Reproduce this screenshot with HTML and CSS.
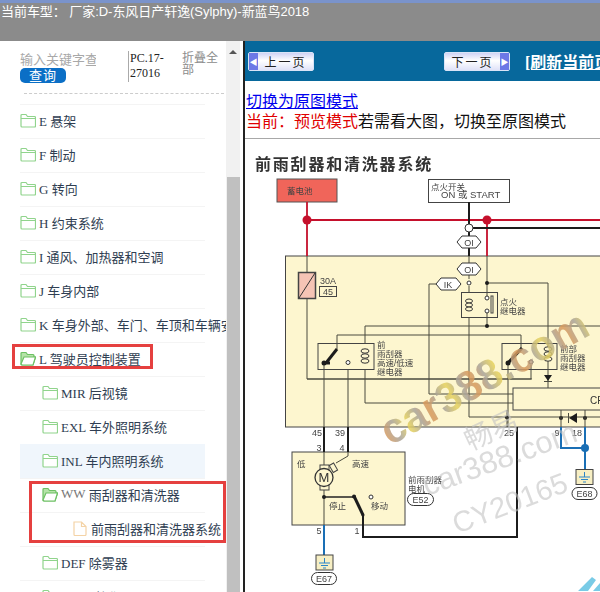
FILE: index.html
```html
<!DOCTYPE html>
<html lang="en">
<head>
    <meta charset="UTF-8">
    <meta name="viewport" content="width=device-width, initial-scale=1.0">
    <title>当前车型</title>
    <link rel="stylesheet" href="styles.css">
</head>
<body>
    <svg class="icon-defs" width="0" height="0">
        <symbol id="folder" viewBox="0 0 16 15">
            <path d="M1 13V2.500C1 1.800 1.400 1.500 2 1.500H6L7.500 3.500H14.500C15 3.500 15.500 4 15.500 4.500V13C15.500 13.600 15 14 14.500 14H2C1.400 14 1 13.600 1 13Z M1 5.500H15.500" fill="#fff" stroke="#90d48c" stroke-width="1.200"/>
        </symbol>
        <symbol id="folder-open" viewBox="0 0 16 15">
            <path d="M1 13V2.500C1 1.800 1.400 1.500 2 1.500H6L7.500 3.500H13C13.600 3.500 14 4 14 4.500V6H15.500L13 14H2C1.400 14 1 13.600 1 13Z" fill="#b5e3a8" stroke="#6cc063" stroke-width="1.200"/>
            <path d="M1 13L4 6H15.500L13 14H2Z" fill="#fff" stroke="#6cc063" stroke-width="1.200"/>
        </symbol>
        <symbol id="file" viewBox="0 0 14 15">
            <path d="M1 1H8.500L13 5.500V13.500C13 14 12.600 14.500 12 14.500H2C1.400 14.500 1 14 1 13.500Z M8.500 1V5.500H13" fill="#fff" stroke="#f4d3a6" stroke-width="1.200"/>
        </symbol>
    </svg>

    <div class="top-bar">
        <p class="car-title">当前车型： 厂家:D-东风日产轩逸(Sylphy)-新蓝鸟2018</p>
    </div>

    <div class="main">
        <div class="sidebar">
            <div class="search-area">
                <div class="search-box">
                    <div class="search-hint">输入关键字查询</div>
                    <div class="search-btn">查询</div>
                </div>
                <div class="pc-code">PC.17-27016</div>
                <div class="fold-all">折叠全部</div>
            </div>
            <ul class="tree">
                <li class="tree-row"><svg class="tree-icon"><use href="#folder"/></svg>E 悬架</li>
                <li class="tree-row"><svg class="tree-icon"><use href="#folder"/></svg>F 制动</li>
                <li class="tree-row"><svg class="tree-icon"><use href="#folder"/></svg>G 转向</li>
                <li class="tree-row"><svg class="tree-icon"><use href="#folder"/></svg>H 约束系统</li>
                <li class="tree-row"><svg class="tree-icon"><use href="#folder"/></svg>I 通风、加热器和空调</li>
                <li class="tree-row"><svg class="tree-icon"><use href="#folder"/></svg>J 车身内部</li>
                <li class="tree-row"><svg class="tree-icon"><use href="#folder"/></svg>K 车身外部、车门、车顶和车辆安全</li>
                <li class="tree-row"><svg class="tree-icon"><use href="#folder-open"/></svg>L 驾驶员控制装置</li>
                <li class="tree-row level-2"><svg class="tree-icon"><use href="#folder"/></svg>MIR 后视镜</li>
                <li class="tree-row level-2"><svg class="tree-icon"><use href="#folder"/></svg>EXL 车外照明系统</li>
                <li class="tree-row level-2 hover"><svg class="tree-icon"><use href="#folder"/></svg>INL 车内照明系统</li>
                <li class="tree-row level-2"><svg class="tree-icon"><use href="#folder-open"/></svg><span class="muted">WW</span>&nbsp;雨刮器和清洗器</li>
                <li class="tree-row level-3"><svg class="tree-icon file-icon"><use href="#file"/></svg>前雨刮器和清洗器系统</li>
                <li class="tree-row level-2"><svg class="tree-icon"><use href="#folder"/></svg>DEF 除雾器</li>
                <li class="tree-row level-2"><svg class="tree-icon"><use href="#folder"/></svg>HRN 喇叭</li>
            </ul>
            <div class="mark mark-l"></div>
            <div class="mark mark-ww"></div>
            <div class="scrollbar">
                <div class="scroll-up"></div>
                <div class="scroll-thumb"></div>
            </div>
        </div>

        <div class="content">
            <div class="toolbar">
                <div class="page-btn prev-btn"><span class="btn-arrow">◀</span><span class="btn-text">上一页</span></div>
                <div class="page-btn next-btn"><span class="btn-text">下一页</span><span class="btn-arrow">▶</span></div>
                <a class="refresh-link" href="#">[刷新当前页]</a>
            </div>
            <div class="mode-info">
                <a class="mode-link" href="#">切换为原图模式</a>
                <p class="mode-text"><span class="mode-current">当前：预览模式</span>若需看大图，切换至原图模式</p>
            </div>

            <svg class="diagram" viewBox="245 140 355 452" width="355" height="452">
                <defs>
                    <linearGradient id="goldText" gradientUnits="userSpaceOnUse" x1="0" y1="0" x2="26" y2="0" spreadMethod="reflect">
                        <stop offset="0" stop-color="#d99a5a"/>
                        <stop offset=".5" stop-color="#a9a39a"/>
                        <stop offset="1" stop-color="#e6d25e"/>
                    </linearGradient>
                </defs>

                <text class="dia-title" x="255" y="171">前雨刮器和清洗器系统</text>

                <!-- unit boxes -->
                <rect class="unit" x="285.500" y="257" width="330" height="171"/>
                <rect class="unit" x="292" y="453" width="113" height="73"/>
                <rect class="unit" x="513" y="389" width="100" height="22"/>

                <!-- supply -->
                <rect class="battery" x="277" y="180" width="60" height="23"/>
                <text class="label" x="287" y="195">蓄电池</text>
                <rect class="switch-box" x="428.500" y="180.500" width="81" height="23"/>
                <text class="label" x="431" y="191">点火开关</text>
                <text class="label-start" x="441" y="199">ON 或 START</text>

                <path class="wire-red" d="M307 203V257M307 221H600M487 221V257"/>
                <circle class="dot-red" cx="307" cy="221" r="4.500"/>
                <circle class="dot-red" cx="487" cy="221" r="4.500"/>
                <path class="wire-bold" d="M469 203V225M469 229H600M469 233V257"/>
                <circle class="node-big" cx="469" cy="229" r="4"/>

                <!-- thin harness -->
                <path class="wire" d="M469 257V280M469 287V293M469 319V418H600"/>
                <path class="wire" d="M307 257V380H532"/>
                <path class="wire" d="M436 285H429V395H513"/>
                <path class="wire" d="M487 257V299M487 312V327M487 284H548V389"/>
                <path class="wire" d="M365 327H600M365 327V344M365 370V404H513"/>
                <path class="wire" d="M337 350V336H521V349"/>
                <path class="wire" d="M324 364V526M348 370V457L336 464"/>
                <path class="wire" d="M508 364V428"/>
                <path class="wire" d="M531 366V380H307"/>

                <!-- connectors -->
                <path class="conn" d="M457 243L462 237H476L481 243L476 249H462Z"/>
                <text class="label-md" x="469" y="247" text-anchor="middle">OI</text>
                <path class="conn" d="M457 270L462 264H476L481 270L476 276H462Z"/>
                <text class="label-md" x="469" y="274" text-anchor="middle">OI</text>
                <path class="conn" d="M436 285L441 279H456L461 285L456 291H441Z"/>
                <text class="label-md" x="448" y="289" text-anchor="middle">IK</text>
                <circle class="node" cx="469" cy="284" r="2"/>
                <circle class="dot" cx="487" cy="284" r="2"/>
                <circle class="dot" cx="487" cy="327" r="2"/>

                <!-- fuse -->
                <rect class="fuse" x="298.500" y="273.500" width="17" height="26"/>
                <path class="wire-fuse" d="M299 299L315 274"/>
                <text class="label-md" x="320" y="285">30A</text>
                <rect class="fuse-no" x="319.500" y="287.500" width="17" height="10"/>
                <text class="label-md" x="328" y="296" text-anchor="middle">45</text>

                <!-- ignition relay -->
                <rect class="relay" x="461.500" y="293.500" width="36" height="25"/>
                <ellipse class="coil-loop" cx="469" cy="302" rx="3.500" ry="2"/>
                <ellipse class="coil-loop" cx="469" cy="306" rx="3.500" ry="2"/>
                <ellipse class="coil-loop" cx="469" cy="310" rx="3.500" ry="2"/>
                <circle class="node" cx="487" cy="299" r="2"/>
                <circle class="node" cx="487" cy="312" r="2"/>
                <rect class="relay" x="491" y="297" width="2" height="17"/>
                <text class="label" x="500" y="306">点火</text>
                <text class="label" x="500" y="315">继电器</text>

                <!-- wiper relays -->
                <rect class="relay" x="318" y="344.500" width="56" height="26"/>
                <path class="wire-thick" d="M324 364L330 364"/>
                <path class="wire-thick" d="M326 364L337 350"/>
                <circle class="dot" cx="324" cy="364" r="2.500"/>
                <circle class="node" cx="348" cy="363.500" r="2"/>
                <ellipse class="coil-loop" cx="365" cy="352" rx="4" ry="2.200"/>
                <ellipse class="coil-loop" cx="365" cy="357" rx="4" ry="2.200"/>
                <ellipse class="coil-loop" cx="365" cy="362" rx="4" ry="2.200"/>
                <text class="label" x="377" y="349">前</text>
                <text class="label" x="377" y="358">雨刮器</text>
                <text class="label" x="377" y="367">高速/低速</text>
                <text class="label" x="377" y="376">继电器</text>

                <rect class="relay" x="502" y="344.500" width="55" height="26"/>
                <path class="wire-thick" d="M508 364L522 349"/>
                <circle class="dot" cx="508" cy="364" r="2.500"/>
                <circle class="node" cx="531" cy="363" r="2"/>
                <ellipse class="coil-loop" cx="548" cy="350" rx="4" ry="2.200"/>
                <ellipse class="coil-loop" cx="548" cy="355" rx="4" ry="2.200"/>
                <ellipse class="coil-loop" cx="548" cy="360" rx="4" ry="2.200"/>
                <text class="label" x="560" y="353">前部</text>
                <text class="label" x="560" y="362">雨刮器</text>
                <text class="label" x="560" y="371">继电器</text>
                <path class="solid" d="M544 376H552L548 382Z"/>
                <path class="wire" d="M544 382.500H552"/>

                <!-- control unit -->
                <text class="label-lg" x="590" y="405">CPU</text>
                <circle class="dot" cx="507" cy="418.500" r="2"/>
                <path class="wire" d="M507 411V428"/>
                <circle class="dot" cx="561" cy="419" r="2"/>
                <circle class="dot" cx="585" cy="419" r="2"/>
                <path class="solid" d="M577 414V424L569 419Z"/>
                <path class="wire" d="M568.500 414V424M561 411V428M585 411V428"/>

                <!-- harness out of the unit -->
                <path class="wire-bold" d="M324 428V453M348 428V453M517 428V538H363V517"/>
                <path class="wire-blue" d="M561 428V449H585M585 428V471M324 526V556"/>
                <circle class="dot-blue" cx="585" cy="449" r="4"/>
                <text class="label-md" x="317" y="437" text-anchor="middle">45</text>
                <text class="label-md" x="340" y="437" text-anchor="middle">39</text>
                <text class="label-md" x="319" y="452" text-anchor="middle">3</text>
                <text class="label-md" x="342" y="452" text-anchor="middle">4</text>
                <text class="label-md" x="509" y="437" text-anchor="middle">25</text>
                <text class="label-md" x="557" y="437" text-anchor="middle">9</text>
                <text class="label-md" x="577" y="437" text-anchor="middle">18</text>
                <text class="label-md" x="319" y="535" text-anchor="middle">5</text>
                <text class="label-md" x="357" y="535" text-anchor="middle">1</text>

                <!-- motor -->
                <text class="label" x="297" y="468">低</text>
                <text class="label" x="352" y="468">高速</text>
                <rect class="unit" x="320" y="466" width="9" height="5"/>
                <rect class="unit" x="320" y="486" width="9" height="5"/>
                <rect class="unit" x="331" y="465" width="5" height="8" transform="rotate(-30 333 469)"/>
                <circle class="motor" cx="324" cy="478.500" r="9"/>
                <text class="label-motor" x="324" y="483" text-anchor="middle">M</text>
                <circle class="dot" cx="324" cy="498" r="2"/>
                <path class="wire-mid" d="M324 498H354"/>
                <path class="wire-thick" d="M354 497L363 516"/>
                <circle class="dot" cx="354" cy="497.500" r="2"/>
                <circle class="dot" cx="363" cy="516" r="1.500"/>
                <circle class="node" cx="371" cy="498" r="2"/>
                <text class="label" x="329" y="510">停止</text>
                <text class="label" x="371" y="510">移动</text>
                <text class="label" x="408" y="484">前雨刮器</text>
                <text class="label" x="408" y="493">电机</text>

                <!-- grounds -->
                <rect class="oval" x="407.500" y="494.500" width="26" height="12" rx="6"/>
                <text class="label-md" x="420.500" y="504" text-anchor="middle">E52</text>
                <rect class="ground" x="316" y="556" width="17" height="15"/>
                <path class="wire-ground" d="M324.500 559V564M319 564H330M321 566.500H328M323 569H326"/>
                <rect class="oval" x="311.500" y="573.500" width="25" height="12" rx="6"/>
                <text class="label-md" x="324" y="583" text-anchor="middle">E67</text>
                <rect class="ground" x="576" y="470.500" width="17" height="15"/>
                <path class="wire-ground" d="M584.500 473V478M579 478H590M581 480.500H588M583 483H586"/>
                <rect class="oval" x="572" y="488.500" width="25" height="12" rx="6"/>
                <text class="label-md" x="584.500" y="498" text-anchor="middle">E68</text>

                <!-- watermarks -->
                <text class="wm-big" transform="translate(390 447) rotate(-29)">car388.com</text>
                <text class="wm-cn" transform="translate(470 452) rotate(-25)">畅易</text>
                <text class="wm-gray" transform="translate(427 497) rotate(-20)">car388.com</text>
                <text class="wm-code" transform="translate(457 535) rotate(-21)">CY20165</text>
                <path class="wm-corner" d="M578 592L592 578L596 581L588 592ZM593 592L600 584V592Z"/>
            </svg>
        </div>
    </div>
</body>
</html>
```

FILE: styles.css
```css
* {
    margin: 0;
    padding: 0;
    box-sizing: border-box;
}

body {
    width: 600px;
    height: 592px;
    overflow: hidden;
    background: white;
    font-family: "Liberation Serif", "Noto Sans CJK SC", serif;
}

.icon-defs {
    position: absolute;
}

.top-bar {
    height: 41px;
    background: #8b8b8b;
    border-top: 3px solid #7a93cb;
    padding-left: 1px;
    padding-top: 1px;
}

.car-title {
    font-family: "Liberation Sans", "Noto Sans CJK SC", sans-serif;
    font-size: 13px;
    line-height: 15px;
    letter-spacing: -0.05px;
    color: white;
    white-space: nowrap;
}

.main {
    display: flex;
    height: 551px;
}

/* left tree */
.sidebar {
    position: relative;
    width: 245px;
    flex: none;
    overflow: hidden;
    padding-right: 19px;
    border-right: 2px solid #222;
}

.search-area {
    display: flex;
    height: 63px;
    margin-left: 20px;
    padding-top: 11px;
    position: relative;
}

.search-area::after {
    content: "";
    position: absolute;
    left: 4px;
    right: 0;
    bottom: 10px;
    border-bottom: 1px dashed #ccc;
}

.search-box {
    width: 108px;
    flex: none;
}

.search-hint {
    width: 76px;
    height: 16px;
    overflow: hidden;
    white-space: nowrap;
    font-size: 13px;
    line-height: 16px;
    color: #a8a8a8;
}

.search-btn {
    width: 46px;
    height: 15px;
    background: #0b6fc6;
    border-radius: 5px;
    color: white;
    font-size: 13px;
    line-height: 15px;
    text-align: center;
    letter-spacing: 1px;
}

.pc-code {
    width: 54px;
    height: 31px;
    flex: none;
    padding-left: 1px;
    border-left: 1px solid #aaa;
    font-size: 12px;
    line-height: 15px;
    color: #222;
    margin-top: -1px;
}

.fold-all {
    width: 37px;
    font-size: 12px;
    line-height: 12px;
    color: #8c8c8c;
}

.tree {
    list-style: none;
    width: 205px;
}

.tree-row {
    display: flex;
    align-items: center;
    height: 34px;
    margin-left: 20px;
    padding-bottom: 2px;
    width: 226px;
    font-size: 13px;
    color: #2f3e52;
    white-space: nowrap;
    overflow: hidden;
    background: linear-gradient(#f4f4f4, #f4f4f4) top left / 185px 1px no-repeat;
}

.tree-icon {
    width: 16px;
    height: 15px;
    flex: none;
    margin-right: 3px;
}

.level-2 {
    padding-left: 22px;
}

.level-3 {
    padding-left: 53px;
}

.file-icon {
    width: 14px;
    margin-right: 4px;
}

.hover {
    background: #f0f6fc;
    width: 185px;
}

.muted {
    color: #777;
}

.mark {
    position: absolute;
    border: 3px solid #e5403f;
}

.mark-l {
    left: 12px;
    top: 303px;
    width: 141px;
    height: 25px;
}

.mark-ww {
    left: 29px;
    top: 440px;
    width: 197px;
    height: 62px;
}

.scrollbar {
    position: absolute;
    left: 226px;
    top: 0;
    width: 17px;
    height: 100%;
    background: #f1f1f1;
    border-right: 3px solid white;
}

.scroll-up {
    position: absolute;
    left: 3px;
    top: 9px;
    border: 4px solid transparent;
    border-top: 0;
    border-bottom: 4px solid #555;
}

.scroll-thumb {
    position: absolute;
    left: 1px;
    top: 136px;
    width: 13px;
    bottom: 0;
    background: #c0c0c0;
}

/* right page */
.content {
    flex: 1;
    min-width: 0;
    overflow: hidden;
}

.toolbar {
    display: flex;
    align-items: center;
    height: 40px;
    padding-left: 3px;
    background: #07689c;
    white-space: nowrap;
    overflow: hidden;
}

.page-btn {
    display: flex;
    align-items: center;
    height: 19px;
    background: linear-gradient(#cfd3f5, #ffffff 45%, #dfe2f8);
    border: 1px solid #d9e4f7;
    border-radius: 2px;
    flex: none;
    font-family: "Noto Sans CJK SC", sans-serif;
    font-size: 12px;
    color: #222;
}

.prev-btn {
    width: 66px;
}

.next-btn {
    width: 66px;
    margin-left: 130px;
}

.btn-text {
    flex: 1;
    text-align: center;
    letter-spacing: 2px;
}

.btn-arrow {
    width: 9px;
    height: 100%;
    background: #6c78e6;
    color: white;
    font-size: 8px;
    line-height: 17px;
    text-align: center;
}

.refresh-link {
    margin-left: 15px;
    font-size: 16px;
    font-weight: bold;
    color: white;
    flex: none;
    text-decoration: underline;
}

.mode-info {
    height: 58px;
    padding-top: 11px;
    border-bottom: 1px solid #a8a8a8;
    font-size: 16px;
    line-height: 20px;
    white-space: nowrap;
}

.mode-link {
    display: block;
    width: max-content;
    padding-left: 1px;
    color: #0000ee;
}

.mode-text {
    padding-left: 1px;
    color: #111;
}

.mode-current {
    color: #e00000;
}

/* wiring diagram */
.diagram {
    display: block;
    font-family: "Liberation Sans", "Noto Sans CJK SC", sans-serif;
    filter: blur(0.3px);
}

.dia-title {
    font-size: 16px;
    font-weight: bold;
    letter-spacing: 1.800px;
    fill: #333;
}

.unit {
    fill: #fdf6cf;
    stroke: #444;
    stroke-width: 1;
}

.battery {
    fill: #f0655a;
    stroke: #555;
    stroke-width: 1;
}

.switch-box,
.relay {
    fill: none;
    stroke: #444;
    stroke-width: 1;
}

.switch-box {
    fill: white;
}

.label {
    font-size: 8.500px;
    fill: #444;
}

.label-start {
    font-size: 9.500px;
    fill: #444;
}

.label-md {
    font-size: 9px;
    fill: #444;
}

.label-lg {
    font-size: 10px;
    fill: #333;
}

.label-motor {
    font-size: 13px;
    fill: #333;
}

.wire,
.wire-red,
.wire-bold,
.wire-blue,
.wire-thick,
.wire-mid,
.wire-fuse,
.wire-ground {
    fill: none;
}

.wire {
    stroke: #4a4a3e;
    stroke-width: 1;
}

.wire-mid {
    stroke: #222;
    stroke-width: 1.500;
}

.wire-red {
    stroke: #c5102c;
    stroke-width: 1.800;
}

.wire-bold {
    stroke: #1c1c1c;
    stroke-width: 2;
}

.wire-thick {
    stroke: #1c1c1c;
    stroke-width: 3;
}

.wire-blue {
    stroke: #1a6fb5;
    stroke-width: 2;
}

.wire-fuse {
    stroke: #333;
    stroke-width: 1;
}

.wire-ground {
    stroke: #2a85c9;
    stroke-width: 1;
}

.coil-loop {
    fill: #fdf6cf;
    stroke: #333;
    stroke-width: 1;
}

.dot-red {
    fill: #c5102c;
}

.dot-blue {
    fill: #1a6fb5;
}

.dot,
.solid {
    fill: #1c1c1c;
}

.node,
.node-big,
.motor,
.conn,
.oval {
    fill: white;
    stroke: #333;
    stroke-width: 1;
}

.fuse {
    fill: #f5c4b5;
    stroke: #444;
    stroke-width: 1.500;
}

.fuse-no {
    fill: #fdf6cf;
    stroke: #444;
    stroke-width: 1;
}

.motor {
    fill: #fdf6cf;
    stroke-width: 1.300;
}

.ground {
    fill: #f7efc4;
    stroke: #444;
    stroke-width: 1;
}

.wm-big {
    font-size: 42px;
    font-weight: bold;
    fill: url(#goldText);
    opacity: 0.85;
}

.wm-gray,
.wm-code,
.wm-cn {
    fill: #c4c4c4;
    opacity: 0.6;
}

.wm-gray {
    font-size: 31px;
}

.wm-code {
    font-size: 29px;
}

.wm-cn {
    font-size: 28px;
}

.wm-corner {
    fill: #79cbe6;
}
```
